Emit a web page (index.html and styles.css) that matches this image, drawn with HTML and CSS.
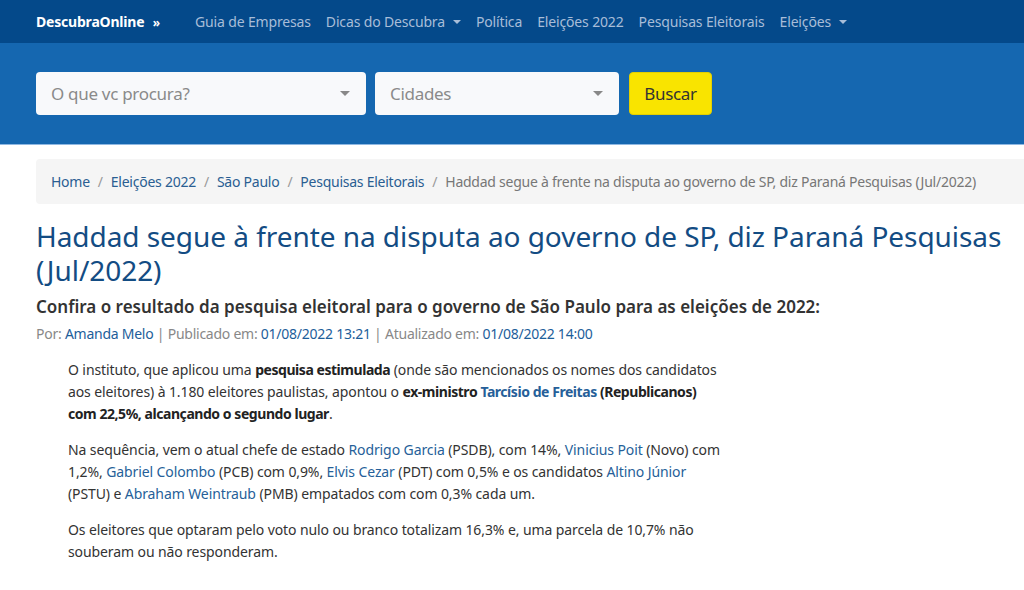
FILE: index.html
```html
<!DOCTYPE html>
<html lang="pt-BR">
<head>
<meta charset="utf-8">
<title>Haddad segue à frente na disputa ao governo de SP</title>
<link rel="stylesheet" href="styles.css">
</head>
<body>
<nav class="navbar">
  <a class="brand" href="#">DescubraOnline <span class="raquo">»</span></a>
  <ul class="nav">
    <li><a href="#">Guia de Empresas</a></li>
    <li><a href="#" class="dropdown">Dicas do Descubra <span class="caret"></span></a></li>
    <li><a href="#">Política</a></li>
    <li><a href="#">Eleições 2022</a></li>
    <li><a href="#">Pesquisas Eleitorais</a></li>
    <li><a href="#" class="dropdown">Eleições <span class="caret"></span></a></li>
  </ul>
</nav>
<section class="search-band">
  <form class="search">
    <div class="select select-what"><span>O que vc procura?</span><span class="arrow"></span></div>
    <div class="select select-city"><span>Cidades</span><span class="arrow"></span></div>
    <button type="button" class="btn-search">Buscar</button>
  </form>
</section>
<main class="content">
  <ol class="breadcrumb">
    <li><a href="#">Home</a></li>
    <li><a href="#">Eleições 2022</a></li>
    <li><a href="#">São Paulo</a></li>
    <li><a href="#">Pesquisas Eleitorais</a></li>
    <li class="active">Haddad segue à frente na disputa ao governo de SP, diz Paraná Pesquisas (Jul/2022)</li>
  </ol>
  <h1 class="title">Haddad segue à frente na disputa ao governo de SP, diz Paraná Pesquisas (Jul/2022)</h1>
  <h2 class="subtitle">Confira o resultado da pesquisa eleitoral para o governo de São Paulo para as eleições de 2022:</h2>
  <p class="meta">Por: <a href="#">Amanda Melo</a> | Publicado em: <span class="hl">01/08/2022 13:21</span> | Atualizado em: <span class="hl">01/08/2022 14:00</span></p>
  <article class="article">
    <p>O instituto, que aplicou uma <strong>pesquisa estimulada</strong> (onde são mencionados os nomes dos candidatos aos eleitores) à 1.180 eleitores paulistas, apontou o <strong>ex-ministro <a href="#">Tarcísio de Freitas</a> (Republicanos) com 22,5%, alcançando o segundo lugar</strong>.</p>
    <p>Na sequência, vem o atual chefe de estado <a href="#">Rodrigo Garcia</a> (PSDB), com 14%, <a href="#">Vinicius Poit</a> (Novo) com 1,2%, <a href="#">Gabriel Colombo</a> (PCB) com 0,9%, <a href="#">Elvis Cezar</a> (PDT) com 0,5% e os candidatos <a href="#">Altino Júnior</a> (PSTU) e <a href="#">Abraham Weintraub</a> (PMB) empatados com com 0,3% cada um.</p>
    <p>Os eleitores que optaram pelo voto nulo ou branco totalizam 16,3% e, uma parcela de 10,7% não souberam ou não responderam.</p>
  </article>
</main>
</body>
</html>
```

FILE: styles.css
```css
* { box-sizing: border-box; }
html, body { margin: 0; padding: 0; }
body {
  font-family: "Noto Sans", "Open Sans", sans-serif;
  font-size: 14px;
  color: #333;
  background: #fff;
  overflow: hidden;
}
a { text-decoration: none; color: #1b5b97; }

.navbar {
  height: 43px;
  background: #04498a;
  display: flex;
  align-items: center;
  padding-left: 36px;
}
.brand {
  color: #fff;
  font-weight: 700;
  font-size: 14px;
  letter-spacing: -0.2px;
  margin-right: 35px;
}
.raquo { margin-left: 5px; font-size: 12px; }
.nav {
  list-style: none;
  display: flex;
  margin: 0;
  padding: 0;
  gap: 15px;
}
.nav a {
  color: #a8bdd8;
  font-size: 14px;
  letter-spacing: -0.15px;
  display: inline-flex;
  align-items: center;
}
.caret {
  display: inline-block;
  width: 0;
  height: 0;
  margin-left: 8px;
  border-left: 4px solid transparent;
  border-right: 4px solid transparent;
  border-top: 4px solid #a8bdd8;
}

.search-band {
  background: #1567b0;
  height: 102px;
  border-bottom: 1px solid #8fb8e2;
  padding: 29px 0 0 36px;
}
.search {
  display: flex;
  gap: 9px;
}
.select {
  height: 43px;
  background: #f8f9fb;
  border-radius: 4px;
  display: flex;
  align-items: center;
  justify-content: space-between;
  padding: 0 16px 0 15px;
  color: #8a8a8a;
  font-size: 17px;
  letter-spacing: -0.3px;
}
.select-what { width: 330px; }
.select-city { width: 244px; }
.arrow {
  width: 0;
  height: 0;
  border-left: 5px solid transparent;
  border-right: 5px solid transparent;
  border-top: 5px solid #888;
}
.btn-search {
  height: 43px;
  width: 83px;
  margin-left: 1px;
  background: #f9e400;
  border: 1px solid #e3cf00;
  border-radius: 4px;
  font-family: inherit;
  font-size: 17px;
  color: #333;
  letter-spacing: -0.3px;
  padding: 0;
}

.content {
  padding: 14px 0 0 36px;
}
.breadcrumb {
  list-style: none;
  margin: 0;
  padding: 0 0 0 15px;
  height: 45px;
  width: 1100px;
  background: #f5f5f5;
  border-radius: 4px;
  display: flex;
  align-items: center;
  white-space: nowrap;
  font-size: 14px;
  letter-spacing: -0.25px;
}
.breadcrumb a { color: #2a5e92; }
.breadcrumb li + li::before {
  content: "/";
  color: #999;
  padding: 0 8px;
}
.breadcrumb .active { color: #777; }

.title {
  margin: 15px 0 0;
  font-size: 28px;
  font-weight: 400;
  line-height: 34px;
  color: #134c83;
  letter-spacing: -0.05px;
  width: 985px;
}
.subtitle {
  margin: 8px 0 0;
  font-size: 17px;
  font-weight: 600;
  color: #333;
  line-height: 24px;
  letter-spacing: 0;
}
.meta {
  margin: 5px 0 0;
  color: #888;
  font-size: 14px;
  line-height: 20px;
  letter-spacing: -0.25px;
}
.meta a, .meta .hl { color: #1d5e9a; }

.article {
  margin: 15px 0 0 32px;
  width: 653px;
}
.article p {
  margin: 0 0 14px;
  line-height: 22px;
  font-size: 14px;
  letter-spacing: -0.1px;
}
.article strong { font-weight: 700; color: #222; letter-spacing: -0.45px; }
.article a { color: #265f99; }
```
